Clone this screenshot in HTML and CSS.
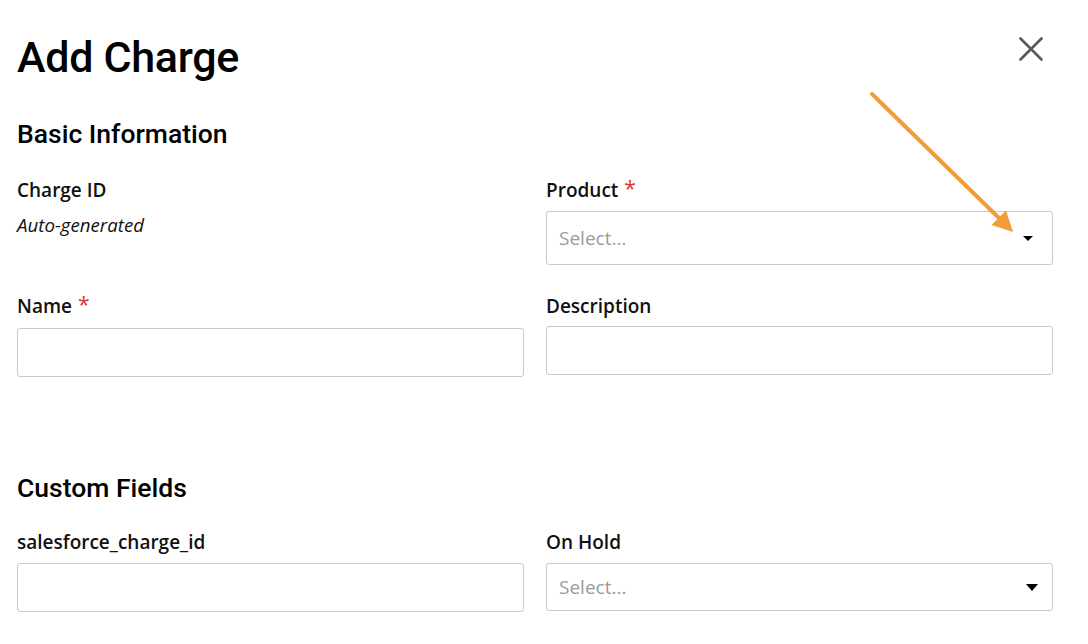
FILE: index.html
```html
<!DOCTYPE html>
<html lang="en">
<head>
<meta charset="utf-8">
<title>Add Charge</title>
<link rel="stylesheet" href="styles.css">
</head>
<body>
<div class="modal">
  <header class="modal-header">
    <h1 class="modal-title">Add Charge</h1>
    <button class="close-btn" type="button" aria-label="Close">
      <svg width="24" height="24" viewBox="0 0 24 24"><path d="M1.5 1.5 L22.5 22.5 M22.5 1.5 L1.5 22.5" stroke="#55585d" stroke-width="2.6" stroke-linecap="round" fill="none"/></svg>
    </button>
  </header>

  <section class="section section-basic">
    <h2 class="section-title">Basic Information</h2>
    <div class="form-grid">
      <div class="field">
        <label class="field-label">Charge ID</label>
        <p class="static-value">Auto-generated</p>
      </div>
      <div class="field">
        <label class="field-label">Product <span class="req">*</span></label>
        <div class="select select-product">
          <span class="placeholder">Select...</span>
          <span class="caret caret-sm"></span>
        </div>
      </div>
      <div class="field field-row2">
        <label class="field-label">Name <span class="req">*</span></label>
        <div class="input"></div>
      </div>
      <div class="field field-row2">
        <label class="field-label">Description</label>
        <div class="input input-desc"></div>
      </div>
    </div>
  </section>

  <section class="section section-custom">
    <h2 class="section-title">Custom Fields</h2>
    <div class="form-grid">
      <div class="field">
        <label class="field-label">salesforce_charge_id</label>
        <div class="input input-custom"></div>
      </div>
      <div class="field">
        <label class="field-label">On Hold</label>
        <div class="select select-hold">
          <span class="placeholder">Select...</span>
          <span class="caret caret-lg"></span>
        </div>
      </div>
    </div>
  </section>

  <svg class="annotation-arrow" width="1088" height="644" viewBox="0 0 1088 644">
    <line x1="872" y1="94" x2="1001" y2="220" stroke="#f29b38" stroke-width="4" stroke-linecap="round"/>
    <polygon points="1013,232 991.5,225 1006,210.5" fill="#f29b38"/>
  </svg>
</div>
</body>
</html>
```

FILE: styles.css
```css
* { box-sizing: border-box; }

html, body {
  margin: 0;
  padding: 0;
  background: #ffffff;
}

body {
  font-family: "Open Sans", "Noto Sans", sans-serif;
  color: #111111;
}

.modal {
  position: relative;
  width: 1088px;
  height: 644px;
  padding: 0 35px 0 17px;
  overflow: hidden;
}

.modal-header {
  display: flex;
  justify-content: space-between;
  align-items: flex-start;
  padding-top: 27px;
}

.modal-title {
  margin: 4px 0 0 0;
  font-family: Roboto, "Liberation Sans", sans-serif;
  font-weight: 500;
  font-size: 43px;
  line-height: 52px;
  color: #000;
  letter-spacing: -0.3px;
}

.close-btn {
  width: 44px;
  height: 44px;
  padding: 0;
  border: 0;
  background: transparent;
  display: flex;
  align-items: center;
  justify-content: center;
}

.section-title {
  margin: 0;
  font-family: Roboto, "Liberation Sans", sans-serif;
  font-weight: 500;
  font-size: 26.5px;
  line-height: 28px;
  color: #000;
}

.section-basic { margin-top: 37px; }
.section-basic .form-grid { margin-top: 30px; }

.section-custom { margin-top: 97px; }
.section-custom .form-grid { margin-top: 28px; }

.form-grid {
  display: grid;
  grid-template-columns: 507px 507px;
  column-gap: 22px;
  row-gap: 29px;
}

.field {
  display: flex;
  flex-direction: column;
}

.field-label {
  font-weight: 600;
  font-size: 19px;
  line-height: 24px;
  color: #111;
}

.req {
  color: #d8342c;
  font-weight: 400;
  margin-left: 1px;
  font-size: 21px;
  line-height: 0;
  position: relative;
  top: -1px;
}

.static-value {
  margin: 11px 0 0 0;
  font-style: italic;
  font-size: 18.7px;
  line-height: 24px;
  color: #111;
}

.input, .select {
  margin-top: 9px;
  border: 1px solid #c8c8d2;
  border-radius: 3px;
  background: #fff;
}

.input { height: 49px; }
.field-row2 .input { margin-top: 10px; }
.field-row2 .input-desc { margin-top: 8px; }
.input-custom { height: 49px; margin-top: 9px; }

.select {
  display: flex;
  align-items: center;
  justify-content: space-between;
  padding: 0 13px 0 12px;
}

.select-product { height: 54px; border-color: #c9c9c9; padding-right: 19px; }
.select-hold { height: 48px; margin-top: 9px; }

.placeholder {
  font-size: 19px;
  color: #9b9b9b;
}

.caret {
  width: 0;
  height: 0;
  border-left-style: solid;
  border-right-style: solid;
  border-top-style: solid;
  border-left-color: transparent;
  border-right-color: transparent;
  border-top-color: #000;
}

.caret-sm {
  border-left-width: 5.5px;
  border-right-width: 5.5px;
  border-top-width: 5px;
}

.caret-lg {
  border-left-width: 6.5px;
  border-right-width: 6.5px;
  border-top-width: 7px;
  margin-right: 1px;
}

.annotation-arrow {
  position: absolute;
  left: 0;
  top: 0;
  pointer-events: none;
}
```
